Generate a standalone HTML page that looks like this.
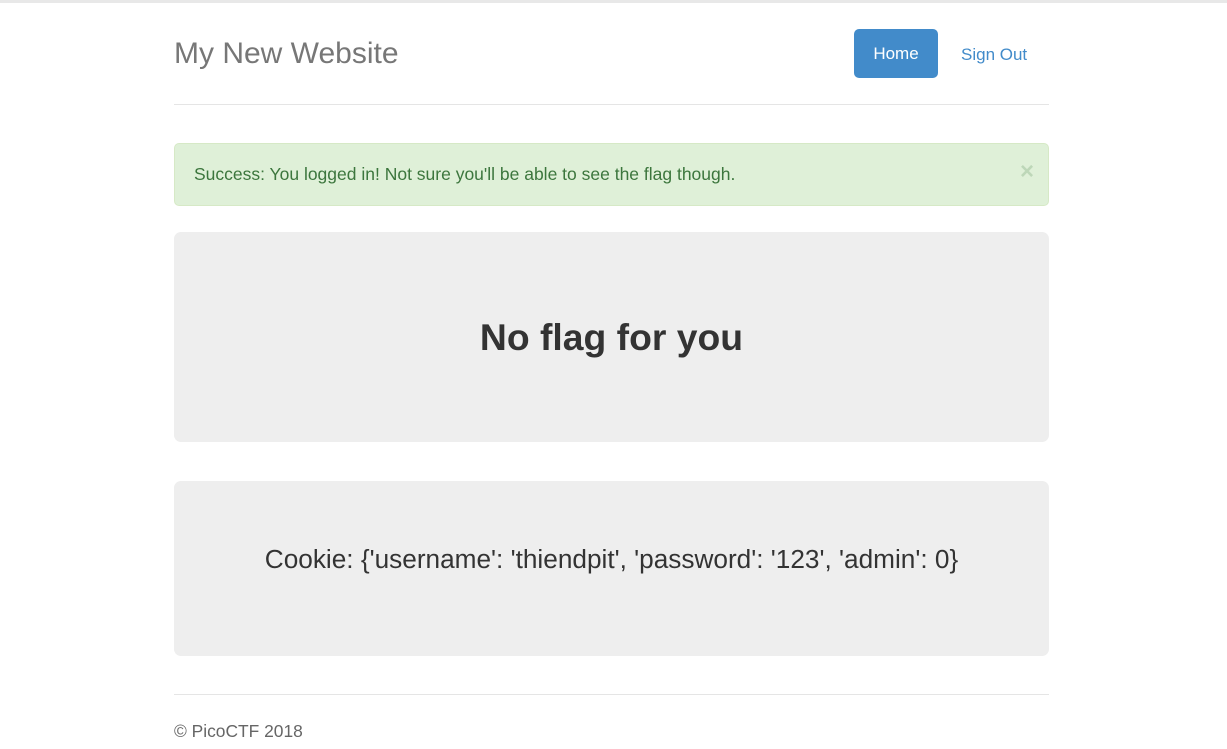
<!DOCTYPE html>
<html><head><style>
*{box-sizing:border-box;margin:0;padding:0}
body{width:1227px;height:749px;overflow:hidden;background:#fff;font-family:"Liberation Sans",Arial,sans-serif;color:#333;position:relative}
.abs{position:absolute}
.top{left:0;top:0;width:1227px;height:3px;background:#e8e8e8}
.title{left:174px;top:36px;font-size:30px;color:#777;line-height:36px}
.home{left:854px;top:29px;width:84px;height:49px;background:#428bca;border-radius:5px;color:#fff;font-size:17px;line-height:49px;text-align:center}
.so{left:961px;top:29px;height:49px;line-height:51px;color:#428bca;font-size:17px}
.hr1{left:174px;top:104px;width:875px;height:1px;background:#e5e5e5}
.alert{left:174px;top:143px;width:875px;height:63px;background:#dff0d8;border:1px solid #d6e9c6;border-radius:5px;color:#3c763d;font-size:17.5px;line-height:61px;padding-left:19px}
.x{right:14px;top:0;font-size:24px;font-weight:bold;color:#3c763d;opacity:.2;line-height:56px}
.j{left:174px;width:875px;background:#eee;border-radius:7px;text-align:center}
.j1{top:232px;height:210px;font-size:37.3px;font-weight:bold;line-height:210px}
.j2{top:481px;height:175px;font-size:26.2px;line-height:156px}
.hr2{left:174px;top:694px;width:875px;height:1px;background:#e5e5e5}
.ft{left:174px;top:721px;font-size:17.4px;color:#666;line-height:20px}
</style></head><body>
<div class="abs top"></div>
<div class="abs title">My New Website</div>
<div class="abs home">Home</div>
<div class="abs so">Sign Out</div>
<div class="abs hr1"></div>
<div class="abs alert">Success: You logged in! Not sure you'll be able to see the flag though.<span class="abs x">×</span></div>
<div class="abs j j1">No flag for you</div>
<div class="abs j j2">Cookie: {'username': 'thiendpit', 'password': '123', 'admin': 0}</div>
<div class="abs hr2"></div>
<div class="abs ft">© PicoCTF 2018</div>
</body></html>
